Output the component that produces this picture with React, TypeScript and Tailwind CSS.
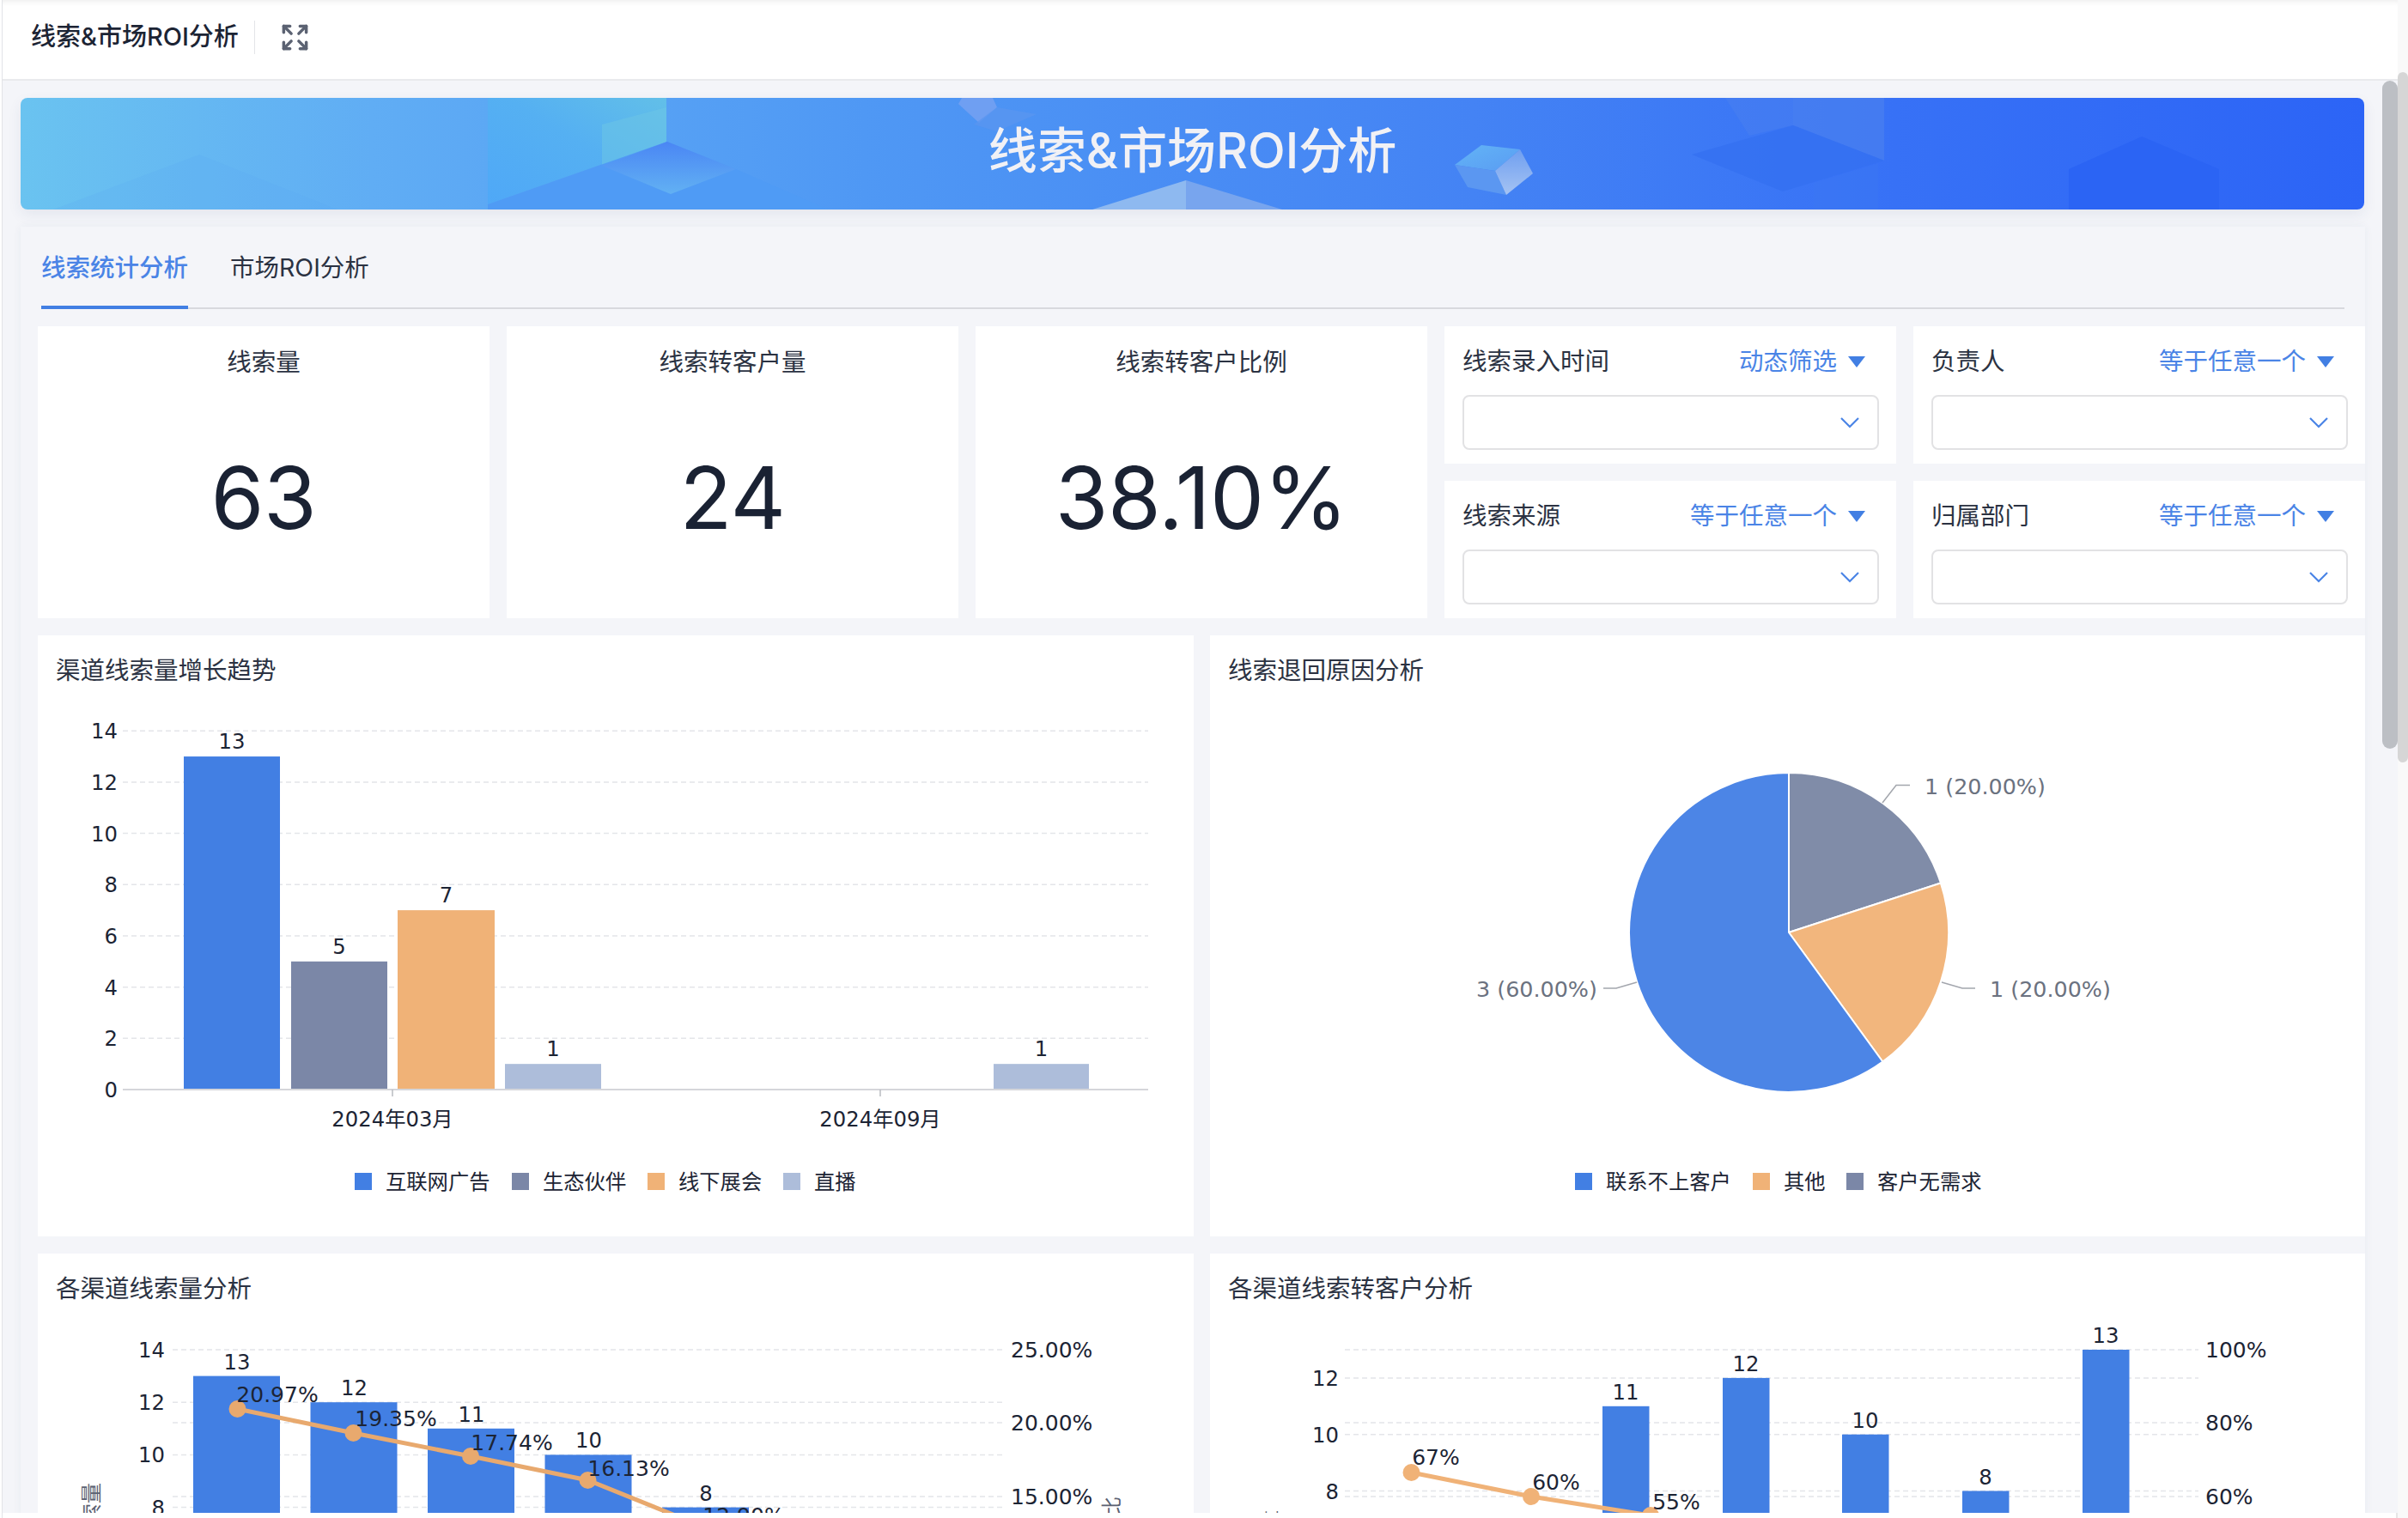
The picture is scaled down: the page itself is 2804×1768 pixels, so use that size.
import { Expand } from 'lucide-react';

const BLUE = '#427fe3';
const SLATE = '#7b87a7';
const ORANGE = '#f0b277';
const PALE = '#adbdda';
const INK = '#1c2434';

const stats = [
    { title: '线索量', value: '63' },
    { title: '线索转客户量', value: '24' },
    { title: '线索转客户比例', value: '38.10%' },
];

function FilterCell({ label, mode }: { label: string; mode: string }) {
    return (
        <div className="bg-white h-[160px] pl-[21px] pr-[20px]">
            <div className="h-[80px] pt-[2px] flex items-center justify-between pr-[16px] text-[28.5px] text-[#2b3242]">
                <span>{label}</span>
                <span className="flex items-center gap-[13px] text-[#4a84e6]">
                    {mode}
                    <svg width="20" height="13" viewBox="0 0 20 13">
                        <path d="M0 0H20L10 13Z" fill="#427fe3" />
                    </svg>
                </span>
            </div>
            <div className="h-[64px] border-2 border-[#e2e2e4] rounded-[8px] flex items-center justify-end pr-[20px]">
                <svg width="24" height="14" viewBox="0 0 24 14" fill="none">
                    <path d="M2 2L12 12L22 2" stroke="#4a84e6" strokeWidth="2.2" />
                </svg>
            </div>
        </div>
    );
}

function Banner() {
    return (
        <div className="relative h-[130px] mr-[1px] rounded-[8px] overflow-hidden shadow-[0_6px_16px_rgba(40,60,110,0.08)] bg-[linear-gradient(90deg,#6ac3f0_0%,#60adf4_15%,#4f98f4_36%,#4483f4_62%,#3771f6_80%,#2c64f6_100%)]">
            <svg className="absolute inset-0" width="2729" height="130" viewBox="24 114 2729 130">
                <defs>
                    <linearGradient id="diamond" x1="0" y1="0" x2="0" y2="1">
                        <stop offset="0" stopColor="#4a86f4" />
                        <stop offset="1" stopColor="#62b1f3" />
                    </linearGradient>
                    <linearGradient id="block" x1="0" y1="1" x2="1" y2="0">
                        <stop offset="0" stopColor="#4fa8f7" />
                        <stop offset="0.55" stopColor="#55b0f2" />
                        <stop offset="1" stopColor="#62bfe8" />
                    </linearGradient>
                    <linearGradient id="gemTop" x1="0" y1="0" x2="1" y2="1">
                        <stop offset="0" stopColor="#62b4f6" />
                        <stop offset="1" stopColor="#5a9cf3" />
                    </linearGradient>
                    <linearGradient id="gemSide" x1="0" y1="0" x2="0" y2="1">
                        <stop offset="0" stopColor="#6f9ff0" />
                        <stop offset="1" stopColor="#a5c3f3" />
                    </linearGradient>
                </defs>
                <polygon points="232,180 62,244 393,244" fill="#58a8f3" fillOpacity="0.18" />
                <polygon points="568,114 776,114 776,165 568,238" fill="url(#block)" />
                <polygon points="701,145 776,125 776,165 701,205" fill="#6bc4e6" fillOpacity="0.55" />
                <polygon points="777,165 857,197 964,244 568,244 568,238" fill="#4f9bf5" />
                <polygon points="777,165 857,197 781,226 701,193" fill="url(#diamond)" />
                <polygon points="1120,114 1156,114 1161,125 1140,143 1116,121" fill="#7ba3f2" fillOpacity="0.75" />
                <polygon points="1161,125 1207,133 1161,153 1134,145" fill="#5a95f0" fillOpacity="0.75" />
                <polygon points="1381,210 1272,244 1381,244" fill="#8eb9f0" />
                <polygon points="1381,210 1493,244 1381,244" fill="#78a5ee" />
                <polygon points="1725,169 1770,174 1741,199 1694,192" fill="url(#gemTop)" />
                <polygon points="1694,192 1741,199 1754,227 1709,218" fill="#5b97f1" />
                <polygon points="1770,174 1785,202 1754,227 1741,199" fill="url(#gemSide)" />
                <polygon points="2009,114 2088,114 2088,146 2037,158" fill="#4a80f0" fillOpacity="0.5" />
                <polygon points="2088,114 2194,114 2194,187 2088,146" fill="#4c82ef" fillOpacity="0.6" />
                <polygon points="1970,180 2088,146 2194,187 2076,223" fill="#3470f0" fillOpacity="0.75" />
                <polygon points="2112,213 2187,190 2187,244 2112,244" fill="#3c78f2" fillOpacity="0.4" />
                <polygon points="2409,197 2494,159 2584,197 2584,244 2409,244" fill="#2b64f4" />
            </svg>
            <div className="relative h-full flex items-center justify-center pb-[6px] text-[57px] font-medium text-[#f1f1f5]">
                线索&市场ROI分析
            </div>
        </div>
    );
}

function ChartCard({ title, top, left, width, height, children }: { title: string; top: number; left: number; width: number; height: number; children: React.ReactNode }) {
    return (
        <div className="bg-white">
            <div className="h-[80px] pt-[2px] flex items-center pl-[21px] text-[28.5px] text-[#2b3242]">{title}</div>
            <svg
                className="block [font-family:'DejaVu_Sans','Noto_Sans_CJK_SC',sans-serif]"
                width={width}
                height={height}
                viewBox={`${left} ${top} ${width} ${height}`}
                fontSize="24.3"
                fill={INK}
            >
                {children}
            </svg>
        </div>
    );
}

function GridLine({ x1, x2, y }: { x1: number; x2: number; y: number }) {
    return <line x1={x1} x2={x2} y1={y} y2={y} stroke="#e4e5e9" strokeWidth="1.5" strokeDasharray="6 4" />;
}

function TrendChart() {
    const y = (v: number) => 1269 - v * 29.84;
    const bars = [
        { x: 214, w: 112, v: 13, c: BLUE },
        { x: 339, w: 112, v: 5, c: SLATE },
        { x: 463, w: 113, v: 7, c: ORANGE },
        { x: 588, w: 112, v: 1, c: PALE },
        { x: 1157, w: 111, v: 1, c: PALE },
    ];
    const legend = [
        { x: 413, c: BLUE, t: '互联网广告' },
        { x: 596, c: SLATE, t: '生态伙伴' },
        { x: 754, c: ORANGE, t: '线下展会' },
        { x: 912, c: PALE, t: '直播' },
    ];
    return (
        <ChartCard title="渠道线索量增长趋势" left={44} top={820} width={1346} height={620}>
            {[2, 4, 6, 8, 10, 12, 14].map((v) => (
                <GridLine key={v} x1={143} x2={1337} y={y(v)} />
            ))}
            {[0, 2, 4, 6, 8, 10, 12, 14].map((v) => (
                <text key={v} x={137} y={y(v) + 9} textAnchor="end">{v}</text>
            ))}
            {bars.map((b) => (
                <g key={b.x}>
                    <rect x={b.x} y={y(b.v)} width={b.w} height={b.v * 29.84} fill={b.c} />
                    <text x={b.x + b.w / 2} y={y(b.v) - 9} textAnchor="middle">{b.v}</text>
                </g>
            ))}
            <line x1={143} x2={1337} y1={1269} y2={1269} stroke="#d5d6da" strokeWidth="2" />
            <line x1={457} x2={457} y1={1269} y2={1277} stroke="#b9bbc0" strokeWidth="1.5" />
            <line x1={1025} x2={1025} y1={1269} y2={1277} stroke="#b9bbc0" strokeWidth="1.5" />
            <text x={457} y={1312} textAnchor="middle">2024年03月</text>
            <text x={1025} y={1312} textAnchor="middle">2024年09月</text>
            {legend.map((l) => (
                <g key={l.x}>
                    <rect x={l.x} y={1366} width={20} height={20} fill={l.c} />
                    <text x={l.x + 36} y={1385}>{l.t}</text>
                </g>
            ))}
        </ChartCard>
    );
}

function ReasonChart() {
    const legend = [
        { x: 1834, c: BLUE, t: '联系不上客户' },
        { x: 2041, c: ORANGE, t: '其他' },
        { x: 2150, c: SLATE, t: '客户无需求' },
    ];
    return (
        <ChartCard title="线索退回原因分析" left={1409} top={820} width={1345} height={620}>
            <g stroke="#ffffff" strokeWidth="2" strokeLinejoin="round">
                <path d="M2083 1086L2083 900A186 186 0 0 1 2259.9 1028.5Z" fill="#808ca8" />
                <path d="M2083 1086L2259.9 1028.5A186 186 0 0 1 2192.3 1236.5Z" fill="#f2b67d" />
                <path d="M2083 1086L2192.3 1236.5A186 186 0 1 1 2083 900Z" fill="#4c85e6" />
            </g>
            <g fill="none" stroke="#a3a6ad" strokeWidth="1.5">
                <path d="M2192 935L2208 914.5H2224" />
                <path d="M2261 1144L2285 1151H2300" />
                <path d="M1906 1144L1882 1151H1867" />
            </g>
            <g fill="#6b7280" fontSize="25.4">
                <text x={2241} y={925}>1 (20.00%)</text>
                <text x={2317} y={1161}>1 (20.00%)</text>
                <text x={1719} y={1161}>3 (60.00%)</text>
            </g>
            {legend.map((l) => (
                <g key={l.x}>
                    <rect x={l.x} y={1366} width={20} height={20} fill={l.c} />
                    <text x={l.x + 36} y={1385}>{l.t}</text>
                </g>
            ))}
        </ChartCard>
    );
}

function Dots({ points, color }: { points: number[][]; color: string }) {
    return (
        <g>
            <polyline points={points.map((p) => p.join(',')).join(' ')} fill="none" stroke={color} strokeWidth="5" />
            {points.map((p) => (
                <circle key={p[0]} cx={p[0]} cy={p[1]} r="10" fill={color} />
            ))}
        </g>
    );
}

function ChannelChart() {
    const y = (v: number) => 1572 + (14 - v) * 30.6;
    const bars = [13, 12, 11, 10, 8];
    const rates = [
        { x: 323, y: 1633, t: '20.97%' },
        { x: 461, y: 1661, t: '19.35%' },
        { x: 596, y: 1689, t: '17.74%' },
        { x: 732, y: 1719, t: '16.13%' },
        { x: 866, y: 1774, t: '12.90%' },
    ];
    return (
        <ChartCard title="各渠道线索量分析" left={44} top={1540} width={1346} height={240}>
            {[8, 10, 12, 14].map((v) => (
                <GridLine key={v} x1={201} x2={1168} y={y(v)} />
            ))}
            <GridLine x1={201} x2={1168} y={1657} />
            <GridLine x1={201} x2={1168} y={1743} />
            {[8, 10, 12, 14].map((v) => (
                <text key={v} x={192} y={y(v) + 9} textAnchor="end">{v}</text>
            ))}
            <g fontSize="25">
                <text x={1177} y={1581}>25.00%</text>
                <text x={1177} y={1666}>20.00%</text>
                <text x={1177} y={1752}>15.00%</text>
            </g>
            <text transform="translate(115,1727) rotate(-90)" textAnchor="end" fill="#5b6272">线索量</text>
            <text transform="translate(1303,1743) rotate(-90)" textAnchor="end" fill="#5b6272">线索占比</text>
            {bars.map((v, i) => (
                <g key={v}>
                    <rect x={225 + i * 136.5} y={y(v)} width={101} height={v * 30.6} fill={BLUE} />
                    <text x={276 + i * 136.5} y={y(v) - 8} textAnchor="middle">{v}</text>
                </g>
            ))}
            <Dots points={[[276.5, 1641], [411.5, 1669], [548, 1696], [684.5, 1724], [821, 1779]]} color="#e8a96e" />
            <g fontSize="25">
                {rates.map((r) => (
                    <text key={r.t} x={r.x} y={r.y} textAnchor="middle">{r.t}</text>
                ))}
            </g>
        </ChartCard>
    );
}

function ConvertChart() {
    const y = (v: number) => 1572 + (13 - v) * 32.9;
    const bars = [
        { x: 1866, v: 11 },
        { x: 2006, v: 12 },
        { x: 2145, v: 10 },
        { x: 2285, v: 8 },
        { x: 2425, v: 13 },
    ];
    return (
        <ChartCard title="各渠道线索转客户分析" left={1409} top={1540} width={1345} height={240}>
            <GridLine x1={1566} x2={2560} y={1572} />
            <GridLine x1={1566} x2={2560} y={1657} />
            <GridLine x1={1566} x2={2560} y={1743} />
            {[8, 10, 12].map((v) => (
                <g key={v}>
                    <GridLine x1={1566} x2={2560} y={y(v)} />
                    <text x={1559} y={y(v) + 9} textAnchor="end">{v}</text>
                </g>
            ))}
            <g fontSize="25">
                <text x={2568} y={1581}>100%</text>
                <text x={2568} y={1666}>80%</text>
                <text x={2568} y={1752}>60%</text>
            </g>
            <text transform="translate(1486,1759) rotate(-90)" textAnchor="end" fill="#5b6272">线索量</text>
            {bars.map((b) => (
                <g key={b.x}>
                    <rect x={b.x} y={y(b.v)} width={54.5} height={b.v * 32.9} fill={BLUE} />
                    <text x={b.x + 27} y={y(b.v) - 8} textAnchor="middle">{b.v}</text>
                </g>
            ))}
            <Dots points={[[1643.5, 1715], [1783, 1743], [1922, 1765], [2061, 1790]]} color={ORANGE} />
            <g fontSize="25">
                <text x={1672} y={1706} textAnchor="middle">67%</text>
                <text x={1812} y={1735} textAnchor="middle">60%</text>
                <text x={1952} y={1758} textAnchor="middle">55%</text>
            </g>
        </ChartCard>
    );
}

export default function App() {
    return (
        <div className="relative w-[2804px] h-[1768px] overflow-hidden bg-white flex pl-[2px] [font-family:Inter,'Noto_Sans_CJK_SC',sans-serif]">
            <div className="w-[2790px] border-l border-[#e2e3e7] flex flex-col">
                <header className="h-[94px] shrink-0 bg-white border-b-2 border-[#e9eaed] flex items-center pl-[33px] pb-[6px] shadow-[inset_0_7px_6px_-5px_rgba(0,0,0,0.07)]">
                    <div className="h-[39px] pr-[18px] border-r border-[#e3e4e8] flex items-center text-[29px] font-medium text-[#1c2434]">
                        线索&市场ROI分析
                    </div>
                    <Expand size={35} strokeWidth={2.4} className="ml-[29px] text-[#5b6272]" />
                </header>

                <main className="h-[1668px] shrink-0 overflow-hidden bg-[#f4f5f9] pt-[20px] pl-[21px] pr-[38px]">
                    <Banner />
                    <div className="mt-[20px] pl-[20px] shadow-[0_0_10px_rgba(40,60,110,0.06)]">
                        <div className="h-[96px] ml-[4px] mr-[24px] border-b-2 border-[#d8d9de] flex items-end gap-[49px] text-[28.5px]">
                            <div className="h-[69px] -mb-[2px] border-b-4 border-[#427fe3] text-[#4a84e6] font-medium">线索统计分析</div>
                            <div className="h-[69px] -mb-[2px] text-[#2b3242]">市场ROI分析</div>
                        </div>

                        <div className="mt-[20px] grid grid-cols-5 gap-[20px]">
                            {stats.map((s) => (
                                <div key={s.title} className="row-span-2 bg-white flex flex-col items-center">
                                    <div className="mt-[22px] h-[40px] leading-[40px] text-[28.5px] text-[#2b3242]">{s.title}</div>
                                    <div className="mt-[78px] h-[120px] leading-[120px] text-[100px] tracking-[-0.5px] text-[#1a2233]">{s.value}</div>
                                </div>
                            ))}
                            <FilterCell label="线索录入时间" mode="动态筛选" />
                            <FilterCell label="负责人" mode="等于任意一个" />
                            <FilterCell label="线索来源" mode="等于任意一个" />
                            <FilterCell label="归属部门" mode="等于任意一个" />
                        </div>

                        <div className="mt-[20px] grid grid-cols-[1346px_1345px] gap-x-[19px] gap-y-[20px]">
                            <TrendChart />
                            <ReasonChart />
                            <ChannelChart />
                            <ConvertChart />
                        </div>
                    </div>
                </main>
            </div>
            <div className="flex-1 bg-[#f9f9f9]" />
            <div className="absolute left-[2774px] top-[94px] w-[18px] h-[778px] rounded-full bg-[#bcbfc4]" />
            <div className="absolute left-[2792px] top-[84px] w-[12px] h-[804px] rounded-full bg-[#d6d6d6]" />
            <div className="absolute left-[2790px] top-[1762px] w-[2px] h-[6px] bg-[#e6e6e6]" />
        </div>
    );
}
